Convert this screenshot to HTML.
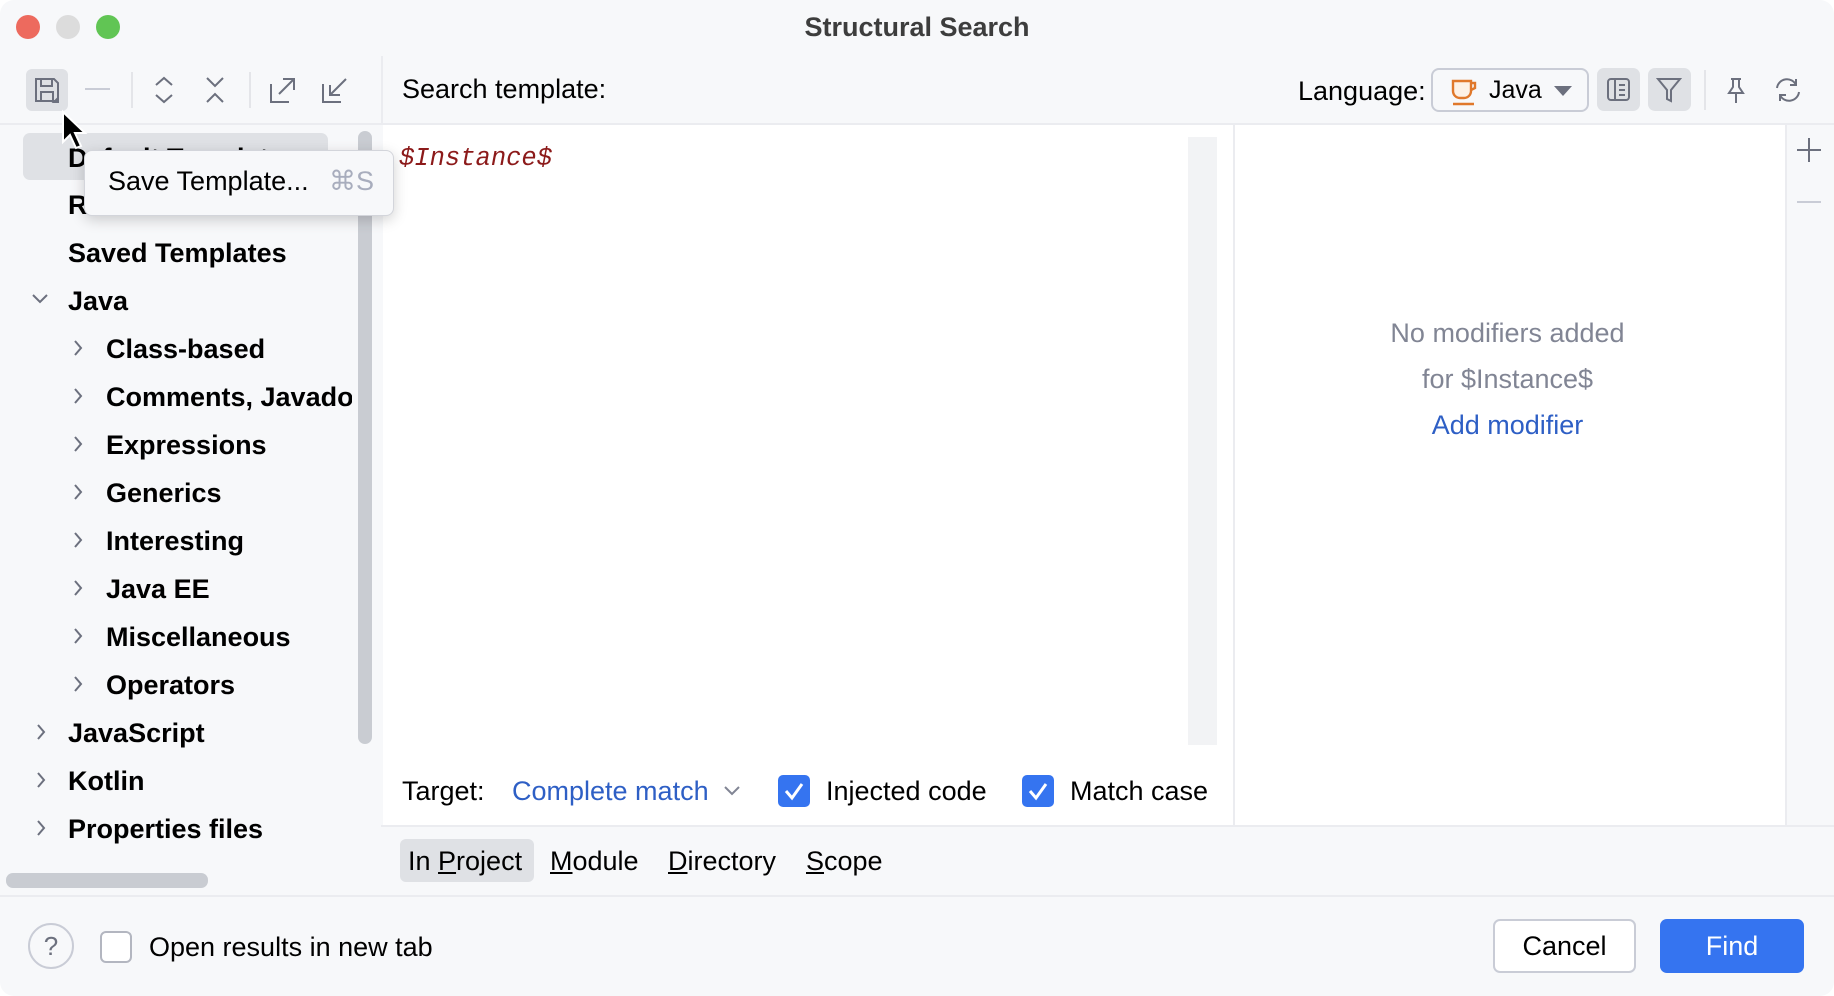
<!DOCTYPE html>
<html><head><meta charset="utf-8"><style>
*{margin:0;padding:0;box-sizing:border-box}
body{width:1834px;height:996px;background:#fff;font-family:"Liberation Sans",sans-serif;overflow:hidden;position:relative;color:#000}
.win{position:absolute;left:0;top:0;width:1834px;height:996px;background:#f7f8fa;border-radius:14px;overflow:hidden}
.a{position:absolute}
.t{position:absolute;font-size:27px;white-space:nowrap;line-height:30px}
.b{font-weight:bold}
.tl{position:absolute;top:15px;width:24px;height:24px;border-radius:50%}
svg{position:absolute;overflow:visible}
</style></head><body><div class="win">
<div class="tl" style="left:16px;background:#ed6a5e"></div>
<div class="tl" style="left:56px;background:#dcdcdc"></div>
<div class="tl" style="left:96px;background:#61c554"></div>
<div class="t b" style="left:0;width:1834px;text-align:center;top:12px;color:#3d3d3d;font-size:27px">Structural Search</div>

<div class="a" style="left:26px;top:69px;width:42px;height:42px;background:#dfe1e5;border-radius:6px"></div>
<svg style="left:33px;top:76px" width="28" height="28" viewBox="0 0 28 28" fill="none" stroke="#6c707e" stroke-width="2"><path d="M3 3h18l4 4v18H3z"/><path d="M8 3v7h11V3M8 25v-9h12v9"/><path d="M25 26l-4 0 4-4z" fill="#6c707e"/></svg>
<div class="a" style="left:85px;top:88px;width:25px;height:2px;background:#c9ccd6"></div>
<div class="a" style="left:131px;top:72px;width:2px;height:36px;background:#e4e5e9"></div>
<svg style="left:152px;top:76px" width="24" height="28" fill="none" stroke="#6c707e" stroke-width="2"><path d="M4 9l8-7 8 7M4 19l8 7 8-7"/></svg>
<svg style="left:203px;top:76px" width="24" height="28" fill="none" stroke="#6c707e" stroke-width="2"><path d="M4 2l8 8 8-8M4 26l8-8 8 8"/></svg>
<div class="a" style="left:249px;top:72px;width:2px;height:36px;background:#e4e5e9"></div>
<svg style="left:269px;top:76px" width="28" height="28" fill="none" stroke="#6c707e" stroke-width="2"><path d="M2 8v18h18M10 18L25 3M14 3h11v11"/></svg>
<svg style="left:321px;top:76px" width="28" height="28" fill="none" stroke="#6c707e" stroke-width="2"><path d="M2 8v18h18M25 3L9 19M9 9v10h10"/></svg>
<div class="a" style="left:381px;top:56px;width:2px;height:68px;background:#ebecf0"></div>
<div class="t" style="left:402px;top:74px">Search template:</div>
<div class="t" style="left:1298px;top:76px">Language:</div>
<div class="a" style="left:1431px;top:68px;width:158px;height:44px;border:2px solid #c9ccd6;border-radius:8px;background:#f7f8fa"></div>
<svg style="left:1451px;top:78px" width="28" height="28" fill="none" stroke="#e0782b" stroke-width="2.4"><path d="M2 3h18v10a7 7 0 0 1-7 7H9a7 7 0 0 1-7-7z" fill="#fdf1e6"/><path d="M20 5h4v5l-4 2M2 26h21"/></svg>
<div class="t" style="left:1489px;top:75px;font-size:25px">Java</div>
<svg style="left:1554px;top:86px" width="18" height="10"><path d="M0 0h18L9 10z" fill="#6c707e"/></svg>
<div class="a" style="left:1597px;top:68px;width:43px;height:43px;background:#dfe1e5;border-radius:7px"></div>
<svg style="left:1606px;top:77px" width="26" height="26" fill="none" stroke="#6c707e" stroke-width="2"><rect x="2" y="2" width="21" height="21" rx="3"/><path d="M9 2v21M13 8h6M13 13h6M13 18h6"/></svg>
<div class="a" style="left:1648px;top:68px;width:43px;height:43px;background:#dfe1e5;border-radius:7px"></div>
<svg style="left:1656px;top:77px" width="26" height="26" fill="none" stroke="#6c707e" stroke-width="2"><path d="M2 2h22l-9 11v11l-4-2v-9z"/></svg>
<div class="a" style="left:1704px;top:70px;width:2px;height:40px;background:#e4e5e9"></div>
<svg style="left:1724px;top:77px" width="24" height="28" fill="none" stroke="#6c707e" stroke-width="2"><path d="M7 2h10M9 2v8l-4 6h14l-4-6V2M12 16v10"/></svg>
<svg style="left:1773px;top:77px" width="30" height="26" fill="none" stroke="#6c707e" stroke-width="2"><path d="M4 11a10 10 0 0 1 19-3M26 15a10 10 0 0 1-19 3M23 2v6h-6M7 24v-6h6"/></svg>
<div class="a" style="left:0;top:123px;width:1834px;height:2px;background:#ebecf0"></div>

<div class="a" style="left:23px;top:133px;width:305px;height:47px;background:#dfe1e5;border-radius:7px"></div>
<div class="t b" style="left:68px;top:143px">Default Templates</div>
<div class="t b" style="left:68px;top:190px">Recent</div>
<div class="t b" style="left:68px;top:238px">Saved Templates</div>
<svg style="left:32px;top:294px" width="16" height="10" fill="none" stroke="#6c707e" stroke-width="2"><path d="M1 1l7 7 7-7"/></svg>
<div class="t b" style="left:68px;top:286px">Java</div>
<div class="t b" style="left:106px;top:334px">Class-based</div>
<div class="t b" style="left:106px;top:382px">Comments, Javadoc</div>
<div class="t b" style="left:106px;top:430px">Expressions</div>
<div class="t b" style="left:106px;top:478px">Generics</div>
<div class="t b" style="left:106px;top:526px">Interesting</div>
<div class="t b" style="left:106px;top:574px">Java EE</div>
<div class="t b" style="left:106px;top:622px">Miscellaneous</div>
<div class="t b" style="left:106px;top:670px">Operators</div>
<div class="t b" style="left:68px;top:718px">JavaScript</div>
<div class="t b" style="left:68px;top:766px">Kotlin</div>
<div class="t b" style="left:68px;top:814px">Properties files</div>
<svg style="left:73px;top:340px" width="10" height="400" fill="none" stroke="#6c707e" stroke-width="2"><path d="M2 1l6 7-6 7M2 49l6 7-6 7M2 97l6 7-6 7M2 145l6 7-6 7M2 193l6 7-6 7M2 241l6 7-6 7M2 289l6 7-6 7M2 337l6 7-6 7"/></svg>
<svg style="left:36px;top:724px" width="10" height="120" fill="none" stroke="#6c707e" stroke-width="2"><path d="M2 1l6 7-6 7M2 49l6 7-6 7M2 97l6 7-6 7"/></svg>
<div class="a" style="left:352px;top:128px;width:29px;height:770px;background:#f7f8fa"></div>
<div class="a" style="left:358px;top:131px;width:14px;height:613px;background:#c9ccd2;border-radius:7px"></div>
<div class="a" style="left:6px;top:873px;width:202px;height:15px;background:#c9ccd2;border-radius:7px"></div>

<div class="a" style="left:383px;top:125px;width:850px;height:700px;background:#fff"></div>
<div class="a" style="left:1188px;top:137px;width:29px;height:608px;background:#f2f3f5"></div>
<div class="t" style="left:399px;top:144px;font-family:'Liberation Mono',monospace;font-style:italic;color:#8c1a1a;font-size:25.5px">$Instance$</div>
<div class="a" style="left:1233px;top:125px;width:2px;height:700px;background:#ebecf0"></div>
<div class="a" style="left:1235px;top:125px;width:551px;height:700px;background:#fff"></div>
<div class="a" style="left:1785px;top:125px;width:2px;height:700px;background:#ebecf0"></div>
<div class="a" style="left:1787px;top:125px;width:47px;height:700px;background:#f7f8fa"></div>
<svg style="left:1796px;top:137px" width="26" height="26" stroke="#6c707e" stroke-width="2"><path d="M13 1v24M1 13h24"/></svg>
<div class="a" style="left:1797px;top:201px;width:24px;height:2px;background:#c9ccd6"></div>
<div class="t" style="left:1232px;width:551px;text-align:center;top:318px;color:#818594">No modifiers added</div>
<div class="t" style="left:1232px;width:551px;text-align:center;top:364px;color:#818594">for $Instance$</div>
<div class="t" style="left:1232px;width:551px;text-align:center;top:410px;color:#2e5fc5">Add modifier</div>

<div class="t" style="left:402px;top:776px">Target:</div>
<div class="t" style="left:512px;top:776px;color:#2e5fc5">Complete match</div>
<svg style="left:724px;top:786px" width="16" height="10" fill="none" stroke="#818594" stroke-width="2"><path d="M1 1l7 7 7-7"/></svg>
<svg style="left:778px;top:775px" width="32" height="32"><rect width="32" height="32" rx="5" fill="#3574f0"/><path d="M8 16l6 7 10-14" fill="none" stroke="#fff" stroke-width="3"/></svg>
<div class="t" style="left:826px;top:776px">Injected code</div>
<svg style="left:1022px;top:775px" width="32" height="32"><rect width="32" height="32" rx="5" fill="#3574f0"/><path d="M8 16l6 7 10-14" fill="none" stroke="#fff" stroke-width="3"/></svg>
<div class="t" style="left:1070px;top:776px">Match case</div>
<div class="a" style="left:381px;top:825px;width:1453px;height:2px;background:#ebecf0"></div>

<div class="a" style="left:400px;top:839px;width:134px;height:43px;background:#dfe1e5;border-radius:6px"></div>
<div class="t" style="left:408px;top:846px">In <u>P</u>roject</div>
<div class="t" style="left:550px;top:846px"><u>M</u>odule</div>
<div class="t" style="left:668px;top:846px"><u>D</u>irectory</div>
<div class="t" style="left:806px;top:846px"><u>S</u>cope</div>
<div class="a" style="left:0;top:895px;width:1834px;height:2px;background:#ebecf0"></div>

<div class="a" style="left:28px;top:923px;width:46px;height:46px;border:2px solid #c9ccd6;border-radius:50%;text-align:center;line-height:42px;font-size:26px;color:#6c707e">?</div>
<div class="a" style="left:100px;top:931px;width:32px;height:32px;border:2px solid #b3b6c0;border-radius:6px;background:#fff"></div>
<div class="t" style="left:149px;top:932px">Open results in new tab</div>
<div class="a" style="left:1493px;top:919px;width:143px;height:54px;border:2px solid #c9ccd6;border-radius:7px;background:#fff;font-size:27px;text-align:center;line-height:50px">Cancel</div>
<div class="a" style="left:1660px;top:919px;width:144px;height:54px;border-radius:7px;background:#3574f0;color:#fff;font-size:27px;text-align:center;line-height:54px">Find</div>

<div class="a" style="left:84px;top:150px;width:310px;height:66px;background:#f7f8fa;border:1px solid #d3d5db;border-radius:8px;box-shadow:0 4px 14px rgba(0,0,0,.18)"></div>
<div class="t" style="left:108px;top:166px">Save Template...</div>
<div class="t" style="left:329px;top:166px;color:#a8adbd">⌘S</div>
<svg style="left:61px;top:110px" width="26" height="40"><path d="M2 2v30l7-7 6 13 5-2-6-13h10z" fill="#000" stroke="#fff" stroke-width="2"/></svg>
</div></body></html>
